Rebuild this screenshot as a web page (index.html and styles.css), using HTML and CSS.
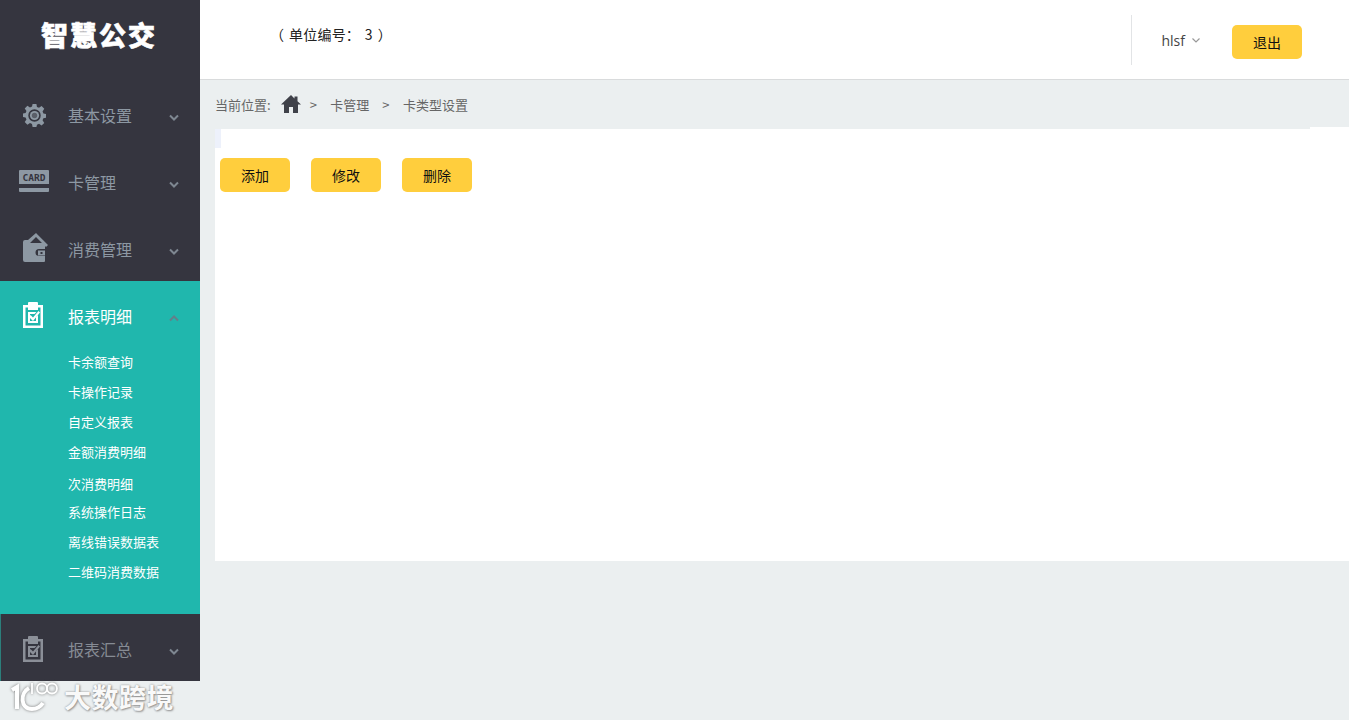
FILE: index.html
```html
<!DOCTYPE html>
<html lang="zh-CN">
<head>
<meta charset="utf-8">
<title>智慧公交</title>
<link rel="stylesheet" href="styles.css">
</head>
<body>
<div class="app">
  <aside class="sidebar">
    <div class="logo">智慧公交</div>
    <nav class="menu">
      <div class="item">
        <svg class="ico gear" viewBox="0 0 24 24"><path fill-rule="evenodd" d="M10 0h4l.6 3.100 2.100.9 2.700-1.800 2.800 2.800-1.800 2.700.9 2.100L24 10.400v3.900l-2.700.6-.9 2.100 1.800 2.700-2.800 2.800-2.700-1.800-2.100.9L14 24h-4l-.6-3.200-2.100-.9-2.700 1.800-2.800-2.800 1.800-2.700-.9-2.100L0 13.600V10l2.700-.6.9-2.100-1.800-2.700 2.800-2.800 2.700 1.800 2.100-.9zM12 5.500a6.500 6.500 0 1 0 0 13 6.500 6.500 0 0 0 0-13z"/><circle cx="12" cy="12" r="4.800"/><circle class="gear-core" cx="12" cy="12" r="2.800"/></svg>
        <span class="label">基本设置</span><svg class="chev" viewBox="0 0 10 7"><path d="M1 1.500l4 4 4-4" /></svg>
      </div>
      <div class="item">
        <svg class="ico card" viewBox="0 0 30 22"><path d="M0 1a1 1 0 0 1 1-1h28a1 1 0 0 1 1 1v13H0z"/><path d="M0 18h30v3a1 1 0 0 1-1 1H1a1 1 0 0 1-1-1z"/><text class="card-text" x="3.500" y="10.800" textLength="23" lengthAdjust="spacingAndGlyphs">CARD</text></svg>
        <span class="label">卡管理</span><svg class="chev" viewBox="0 0 10 7"><path d="M1 1.500l4 4 4-4" /></svg>
      </div>
      <div class="item">
        <svg class="ico wallet" viewBox="0 0 25 29"><path d="M2 7h3L13 0l12 12-2 2L13 4 7 10h15v6h-6a3.500 3.500 0 0 0-3.500 3.500 3.500 3.500 0 0 0 3.500 3.500h6v5a1 1 0 0 1-1 1H2a2 2 0 0 1-2-2V9a2 2 0 0 1 2-2z"/><path fill-rule="evenodd" d="M15 17.500h7v5h-7zM17.500 19v2h2v-2z"/></svg>
        <span class="label">消费管理</span><svg class="chev" viewBox="0 0 10 7"><path d="M1 1.500l4 4 4-4" /></svg>
      </div>
      <div class="group">
        <div class="item active">
          <svg class="ico clip" viewBox="0 0 20 26"><path fill-rule="evenodd" d="M0 3h5V1a1 1 0 0 1 1-1h8a1 1 0 0 1 1 1v2h5v23H0zM2.500 5.500v18h15v-18H15V8H5V5.500z"/><path d="M5 10h8.500l-2 2H7v7h6v-4l2-2v8H5z"/><path d="M7.500 13l2.500 2.500 5.500-6.500 1.500 1.500-7 8.500-4-4z"/></svg>
          <span class="label">报表明细</span><svg class="chev up" viewBox="0 0 10 7"><path d="M1 5.500l4-4 4 4" /></svg>
        </div>
        <ul class="sub">
          <li>卡余额查询</li>
          <li>卡操作记录</li>
          <li>自定义报表</li>
          <li>金额消费明细</li>
          <li>次消费明细</li>
          <li>系统操作日志</li>
          <li>离线错误数据表</li>
          <li>二维码消费数据</li>
        </ul>
      </div>
      <div class="item last">
        <svg class="ico clip" viewBox="0 0 20 26"><path fill-rule="evenodd" d="M0 3h5V1a1 1 0 0 1 1-1h8a1 1 0 0 1 1 1v2h5v23H0zM2.500 5.500v18h15v-18H15V8H5V5.500z"/><path d="M5 10h8.500l-2 2H7v7h6v-4l2-2v8H5z"/><path d="M7.500 13l2.500 2.500 5.500-6.500 1.500 1.500-7 8.500-4-4z"/></svg>
        <span class="label">报表汇总</span><svg class="chev" viewBox="0 0 10 7"><path d="M1 1.500l4 4 4-4" /></svg>
      </div>
    </nav>
    <div class="mark">
      <svg class="mark-ico" viewBox="0 0 50 30"><path class="thick" d="M2 8l5-3v22M19 6C10 11 10 27 22 27c5 0 9-3 11-6"/><path d="M22 1v11"/><circle cx="32" cy="6.500" r="5"/><circle cx="42" cy="6.500" r="5"/></svg>
      <span class="mark-text">大数跨境</span>
    </div>
  </aside>
  <main class="main">
    <header class="top">
      <div class="unit">（ 单位编号： 3 ）</div>
      <div class="user">
        <span class="name">hlsf</span><svg class="caret" viewBox="0 0 10 7"><path d="M1.500 1.500l3.500 3.500 3.500-3.500" /></svg>
        <button class="btn">退出</button>
      </div>
    </header>
    <div class="crumb">
      <span>当前位置:</span>
      <svg class="home" viewBox="0 0 20 20"><path d="M10 1L0 10.500h3V19h5v-6h4v6h5v-8.500h3l-3.500-3.300V2.500h-3v1.900z"/></svg>
      <span class="sep">&gt;</span><span class="step">卡管理</span>
      <span class="sep">&gt;</span><span class="step">卡类型设置</span>
    </div>
    <section class="panel">
      <div class="actions">
        <button class="btn">添加</button>
        <button class="btn">修改</button>
        <button class="btn">删除</button>
      </div>
    </section>
  </main>
</div>
</body>
</html>
```
FILE: styles.css
```css
* { box-sizing: border-box; }
html, body { margin: 0; height: 100%; overflow: hidden; }
body {
  font-family: "Noto Sans CJK SC", "Noto Sans", sans-serif;
  background: #ebeff0;
  color: #333;
}
.app { display: flex; height: 720px; }
.sidebar { width: 200px; flex: none; display: flex; flex-direction: column; }
.logo {
  height: 80px;
  background: #35353f;
  color: #fff;
  font-size: 27px;
  font-weight: 900;
  letter-spacing: 2px;
  line-height: 70px;
  padding-left: 41px;
  -webkit-text-stroke: 0.6px #fff;
}
.menu { display: flex; flex-direction: column; }
.item {
  height: 67px;
  padding-top: 3px;
  background: #35353f;
  display: flex;
  align-items: center;
  color: #8d98a3;
  font-size: 16px;
}
.item.active { background: #20b7ad; color: #fff; }
.item.last { border-left: 1px solid #2c7f7b; color: #868b94; }
.ico { flex: none; fill: #8d98a3; }
.gear { width: 23px; height: 23px; margin: 0 22px 0 23px; }
.gear-core { fill: #5a5e68; }
.card { width: 30px; height: 22px; margin: -2px 19px 0 19px; }
.card-text {
  font: 700 8.500px "DejaVu Sans Mono", monospace;
  fill: #35353f;
}
.wallet { width: 25px; height: 29px; margin: -3px 20px 0 23px; }
.clip { width: 20px; height: 26px; margin: -2px 25px 0 23px; }
.active .clip { fill: #fff; }
.last .clip { margin: 0 25px 0 22px; fill: #8b8f98; }
.label { flex: 1; }
.chev {
  flex: none;
  width: 10px;
  height: 7px;
  margin: 4px 21px 0 0;
  fill: none;
  stroke: #7e8791;
  stroke-width: 2;
}
.chev.up { stroke: #62808a; }
.group { background: #20b7ad; height: 333px; }
.sub {
  list-style: none;
  margin: -1px 0 0;
  padding: 0 0 0 68px;
  color: #fff;
  font-size: 13px;
}
.sub li { height: 30px; line-height: 29px; }
.sub li:nth-child(5) { padding-top: 2px; }
.mark {
  display: flex;
  align-items: flex-start;
  gap: 4px;
  padding: 1px 0 0 10px;
  height: 39px;
}
.mark-ico {
  flex: none;
  width: 50px;
  height: 30px;
  fill: none;
  stroke: #fff;
  stroke-width: 1.800;
  filter: drop-shadow(0 0 1.500px #777);
}
.mark-ico .thick { stroke-width: 4; }
.mark-text {
  color: #f9f9f9;
  font-size: 27px;
  font-weight: 700;
  letter-spacing: 0.5px;
  line-height: 30px;
  text-shadow: 0 0 2px #8a8a8a, 1px 1px 2px #999;
}
.main { flex: 1; min-width: 0; display: flex; flex-direction: column; }
.top {
  height: 80px;
  background: #fff;
  border-bottom: 1px solid #d9dbdc;
  display: flex;
  justify-content: space-between;
  padding: 15px 47px 15px 70px;
}
.unit { font-size: 14px; line-height: 38px; color: #222; word-spacing: 1.500px; letter-spacing: 0.2px; }
.user {
  display: flex;
  align-items: center;
  border-left: 1px solid #e2e4e6;
  height: 50px;
  padding-left: 29px;
}
.name { font-size: 14px; color: #444; font-family: "Open Sans", sans-serif; }
.caret {
  width: 10px;
  height: 7px;
  margin: 1px 0 0 6px;
  fill: none;
  stroke: #999;
  stroke-width: 1.200;
}
.btn {
  width: 70px;
  height: 34px;
  border: 0;
  border-radius: 5px;
  background: #ffce3d;
  color: #111;
  font: 14px "Noto Sans CJK SC", sans-serif;
  padding: 0;
}
.user .btn { margin-left: 31px; margin-top: 4px; }
.crumb {
  height: 49px;
  padding-left: 15px;
  display: flex;
  align-items: center;
  font-size: 13px;
  color: #666;
}
.home { width: 20px; height: 20px; margin: 0 9px 2px 10px; fill: #3f4149; }
.sep { margin-right: 13.500px; font-size: 13px; }
.step { margin-right: 13px; }
.panel {
  position: relative;
  margin-left: 15px;
  height: 432px;
  background: #fff;
  padding: 29px 0 0 5px;
}
.panel::before {
  content: "";
  position: absolute;
  left: 0;
  top: 0;
  width: 6px;
  height: 19px;
  background: #edf1fb;
}
.panel::after {
  content: "";
  position: absolute;
  right: 0;
  top: -2px;
  width: 39px;
  height: 2px;
  background: #fff;
}
.actions { display: flex; gap: 21px; }
```
